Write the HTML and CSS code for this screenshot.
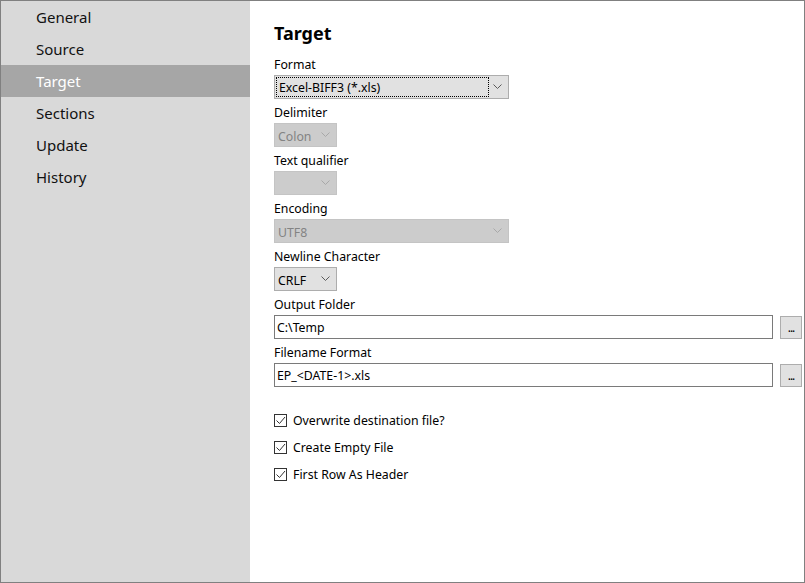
FILE: index.html
```html
<!DOCTYPE html>
<html>
<head>
<meta charset="utf-8">
<link rel="stylesheet" href="styles.css">
</head>
<body>
<div class="window">
  <nav class="sidebar">
    <div class="nav-item">General</div>
    <div class="nav-item">Source</div>
    <div class="nav-item selected">Target</div>
    <div class="nav-item">Sections</div>
    <div class="nav-item">Update</div>
    <div class="nav-item">History</div>
  </nav>
  <main class="main">
    <h1 class="title">Target</h1>

    <div class="label">Format</div>
    <div class="select wide focused">
      <span class="focus-rect">Excel-BIFF3 (*.xls)</span>
      <svg class="chev" width="9" height="6" viewBox="0 0 9 6"><path d="M0.5 0.5 L4.5 4.5 L8.5 0.5" fill="none" stroke="#5a5a5a" stroke-width="1"/></svg>
    </div>

    <div class="label">Delimiter</div>
    <div class="select narrow disabled">
      <span class="val">Colon</span>
      <svg class="chev" width="9" height="6" viewBox="0 0 9 6"><path d="M0.5 0.5 L4.5 4.5 L8.5 0.5" fill="none" stroke="#a8a8a8" stroke-width="1"/></svg>
    </div>

    <div class="label">Text qualifier</div>
    <div class="select narrow disabled">
      <span class="val"></span>
      <svg class="chev" width="9" height="6" viewBox="0 0 9 6"><path d="M0.5 0.5 L4.5 4.5 L8.5 0.5" fill="none" stroke="#a8a8a8" stroke-width="1"/></svg>
    </div>

    <div class="label">Encoding</div>
    <div class="select wide disabled">
      <span class="val">UTF8</span>
      <svg class="chev" width="9" height="6" viewBox="0 0 9 6"><path d="M0.5 0.5 L4.5 4.5 L8.5 0.5" fill="none" stroke="#a8a8a8" stroke-width="1"/></svg>
    </div>

    <div class="label">Newline Character</div>
    <div class="select narrow">
      <span class="val">CRLF</span>
      <svg class="chev" width="9" height="6" viewBox="0 0 9 6"><path d="M0.5 0.5 L4.5 4.5 L8.5 0.5" fill="none" stroke="#5a5a5a" stroke-width="1"/></svg>
    </div>

    <div class="label">Output Folder</div>
    <div class="input-row">
      <div class="textbox">C:\Temp</div>
      <div class="browse">...</div>
    </div>

    <div class="label">Filename Format</div>
    <div class="input-row">
      <div class="textbox">EP_&lt;DATE-1&gt;.xls</div>
      <div class="browse">...</div>
    </div>

    <div class="checks">
      <div class="check"><span class="box"><svg width="11" height="11" viewBox="0 0 11 11"><path d="M1.5 5.5 L4.5 8.5 L10 2" fill="none" stroke="#333" stroke-width="1"/></svg></span>Overwrite destination file?</div>
      <div class="check"><span class="box"><svg width="11" height="11" viewBox="0 0 11 11"><path d="M1.5 5.5 L4.5 8.5 L10 2" fill="none" stroke="#333" stroke-width="1"/></svg></span>Create Empty File</div>
      <div class="check"><span class="box"><svg width="11" height="11" viewBox="0 0 11 11"><path d="M1.5 5.5 L4.5 8.5 L10 2" fill="none" stroke="#333" stroke-width="1"/></svg></span>First Row As Header</div>
    </div>
  </main>
</div>
</body>
</html>
```

FILE: styles.css
```css
html, body {
  margin: 0;
  padding: 0;
  background: #ffffff;
}

.window {
  width: 805px;
  height: 583px;
  box-sizing: border-box;
  border: 1px solid #808080;
  display: flex;
  font-family: "Noto Sans", "Open Sans", sans-serif;
  color: #000;
  overflow: hidden;
}

.sidebar {
  width: 249px;
  flex: none;
  background: #d9d9d9;
}

.nav-item {
  height: 32px;
  line-height: 33px;
  padding-left: 35px;
  font-size: 15px;
  color: #111;
}

.nav-item.selected {
  background: #a6a6a6;
  color: #ffffff;
}

.main {
  flex: 1;
  padding: 0 2px 0 24px;
  font-size: 12.3px;
}

.title {
  margin: 0;
  height: 50px;
  box-sizing: border-box;
  padding-top: 20px;
  font-size: 18px;
  font-weight: bold;
  line-height: 24px;
}

.label {
  height: 24px;
  box-sizing: border-box;
  padding-top: 5px;
  line-height: 18px;
}

.select {
  height: 24px;
  box-sizing: border-box;
  border: 1px solid #adadad;
  background: #e1e1e1;
  display: flex;
  align-items: center;
  justify-content: space-between;
  padding: 0 6px 0 3px;
}

.select.wide { width: 235px; }
.select.narrow { width: 63px; }

.select.disabled {
  background: #cccccc;
  border-color: #c4c4c4;
  color: #838383;
}

.focus-rect {
  flex: 1;
  height: 20px;
  line-height: 20px;
  box-sizing: border-box;
  border: 1px dotted #000;
  margin-left: -2px;
  margin-right: 4px;
  padding-left: 2px;
}

.val {
  line-height: 18px;
  padding-top: 3px;
}

.chev {
  display: block;
  flex: none;
}

.input-row {
  display: flex;
  align-items: center;
  gap: 7px;
  height: 24px;
}

.textbox {
  flex: 1;
  height: 24px;
  box-sizing: border-box;
  border: 1px solid #7a7a7a;
  background: #fff;
  padding-left: 2px;
  line-height: 23px;
}

.browse {
  width: 22px;
  height: 23px;
  box-sizing: border-box;
  border: 1px solid #adadad;
  background: #e1e1e1;
  font-size: 12px;
  text-align: center;
  line-height: 22px;
  letter-spacing: -1px;
}

.checks {
  padding-top: 20px;
  display: flex;
  flex-direction: column;
}

.check {
  height: 27px;
  display: flex;
  align-items: center;
}

.box {
  width: 13px;
  height: 13px;
  box-sizing: border-box;
  border: 1px solid #333;
  background: #fff;
  margin-right: 6px;
  display: flex;
  align-items: center;
  justify-content: center;
}

.box svg { display: block; }
```
